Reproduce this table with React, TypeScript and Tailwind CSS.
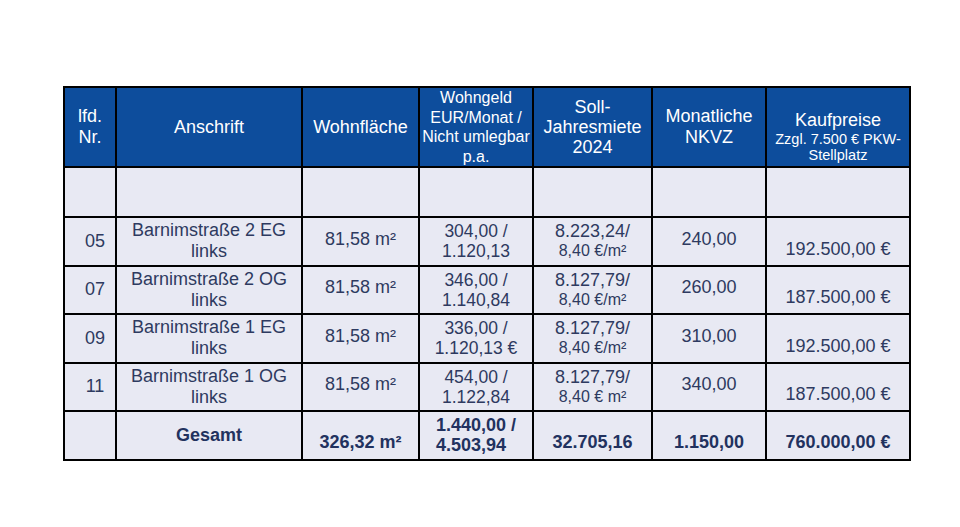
const rows = [
  {
    nr: "05",
    addr: "Barnimstraße 2 EG",
    wg1: "304,00 /",
    wg2: "1.120,13",
    soll1: "8.223,24/",
    soll2: "8,40 €/m²",
    nk: "240,00",
    preis: "192.500,00 €",
  },
  {
    nr: "07",
    addr: "Barnimstraße 2 OG",
    wg1: "346,00 /",
    wg2: "1.140,84",
    soll1: "8.127,79/",
    soll2: "8,40 €/m²",
    nk: "260,00",
    preis: "187.500,00 €",
  },
  {
    nr: "09",
    addr: "Barnimstraße 1 EG",
    wg1: "336,00 /",
    wg2: "1.120,13 €",
    soll1: "8.127,79/",
    soll2: "8,40 €/m²",
    nk: "310,00",
    preis: "192.500,00 €",
  },
  {
    nr: "11",
    addr: "Barnimstraße 1 OG",
    wg1: "454,00 /",
    wg2: "1.122,84",
    soll1: "8.127,79/",
    soll2: "8,40 € m²",
    nk: "340,00",
    preis: "187.500,00 €",
  },
];

const th = "border-2 border-black bg-[#0d4d9c] text-white font-normal text-center align-middle p-0";
const td = "border-2 border-black bg-[#e8e9f3] text-center p-0";

export default function App() {
  return (
    <div
      className="w-[960px] h-[527px] bg-white pt-[86px] pl-[63px] overflow-hidden"
      style={{ fontFamily: '"Liberation Sans", Arial, sans-serif' }}
    >
      <table className="table-fixed border-collapse w-[846px] text-[#2e3a60]">
        <colgroup>
          <col className="w-[52px]" />
          <col className="w-[186px]" />
          <col className="w-[117px]" />
          <col className="w-[114px]" />
          <col className="w-[119px]" />
          <col className="w-[114px]" />
          <col className="w-[144px]" />
        </colgroup>
        <thead>
          <tr className="h-[79px]">
            <th className={`${th} text-[18px] leading-[21px]`}>
              lfd.
              <br />
              Nr.
            </th>
            <th className={`${th} text-[18px] leading-[21px]`}>Anschrift</th>
            <th className={`${th} text-[18px] leading-[21px]`}>Wohnfläche</th>
            <th className={`${th} text-[16px] leading-[19.5px]`}>
              Wohngeld
              <br />
              EUR/Monat /
              <br />
              Nicht umlegbar
              <br />
              p.a.
            </th>
            <th className={`${th} text-[18px] leading-[20px]`}>
              Soll-
              <br />
              Jahresmiete
              <br />
              2024
            </th>
            <th className={`${th} text-[18px] leading-[21px]`}>
              Monatliche
              <br />
              NKVZ
            </th>
            <th className={`${th} pt-[18px]`}>
              <div className="text-[18px] leading-[22px]">Kaufpreise</div>
              <div className="text-[14.5px] leading-[16px]">Zzgl. 7.500 € PKW-</div>
              <div className="text-[14.5px] leading-[16px]">Stellplatz</div>
            </th>
          </tr>
        </thead>
        <tbody>
          <tr className="h-[50px]">
            <td className={td}></td>
            <td className={td}></td>
            <td className={td}></td>
            <td className={td}></td>
            <td className={td}></td>
            <td className={td}></td>
            <td className={td}></td>
          </tr>
          {rows.map((r) => (
            <tr key={r.nr} className="h-[48.5px]">
              <td className={`${td} align-middle text-[18px] pl-[10px]`}>{r.nr}</td>
              <td className={`${td} align-middle text-[18px] leading-[21px]`}>
                {r.addr}
                <br />
                links
              </td>
              <td className={`${td} align-middle text-[18px] pb-[4px]`}>81,58 m²</td>
              <td className={`${td} align-middle text-[17.5px] leading-[20px]`}>
                {r.wg1}
                <br />
                {r.wg2}
              </td>
              <td className={`${td} align-middle leading-[20px]`}>
                <div className="text-[18px]">{r.soll1}</div>
                <div className="text-[16px]">{r.soll2}</div>
              </td>
              <td className={`${td} align-middle text-[18px] pb-[4px]`}>{r.nk}</td>
              <td className={`${td} align-bottom text-[18px] pb-[2px]`}>{r.preis}</td>
            </tr>
          ))}
          <tr className="h-[48.5px] font-bold text-[#22325f]">
            <td className={td}></td>
            <td className={`${td} align-middle text-[18px]`}>Gesamt</td>
            <td className={`${td} align-bottom text-[18px] pb-[3px]`}>326,32 m²</td>
            <td className={`${td} align-middle text-left pl-[16px] text-[18px] leading-[20px]`}>
              1.440,00 /
              <br />
              4.503,94
            </td>
            <td className={`${td} align-bottom text-[18px] pb-[3px]`}>32.705,16</td>
            <td className={`${td} align-bottom text-[18px] pb-[3px]`}>1.150,00</td>
            <td className={`${td} align-bottom text-[18px] pb-[3px]`}>760.000,00 €</td>
          </tr>
        </tbody>
      </table>
    </div>
  );
}
